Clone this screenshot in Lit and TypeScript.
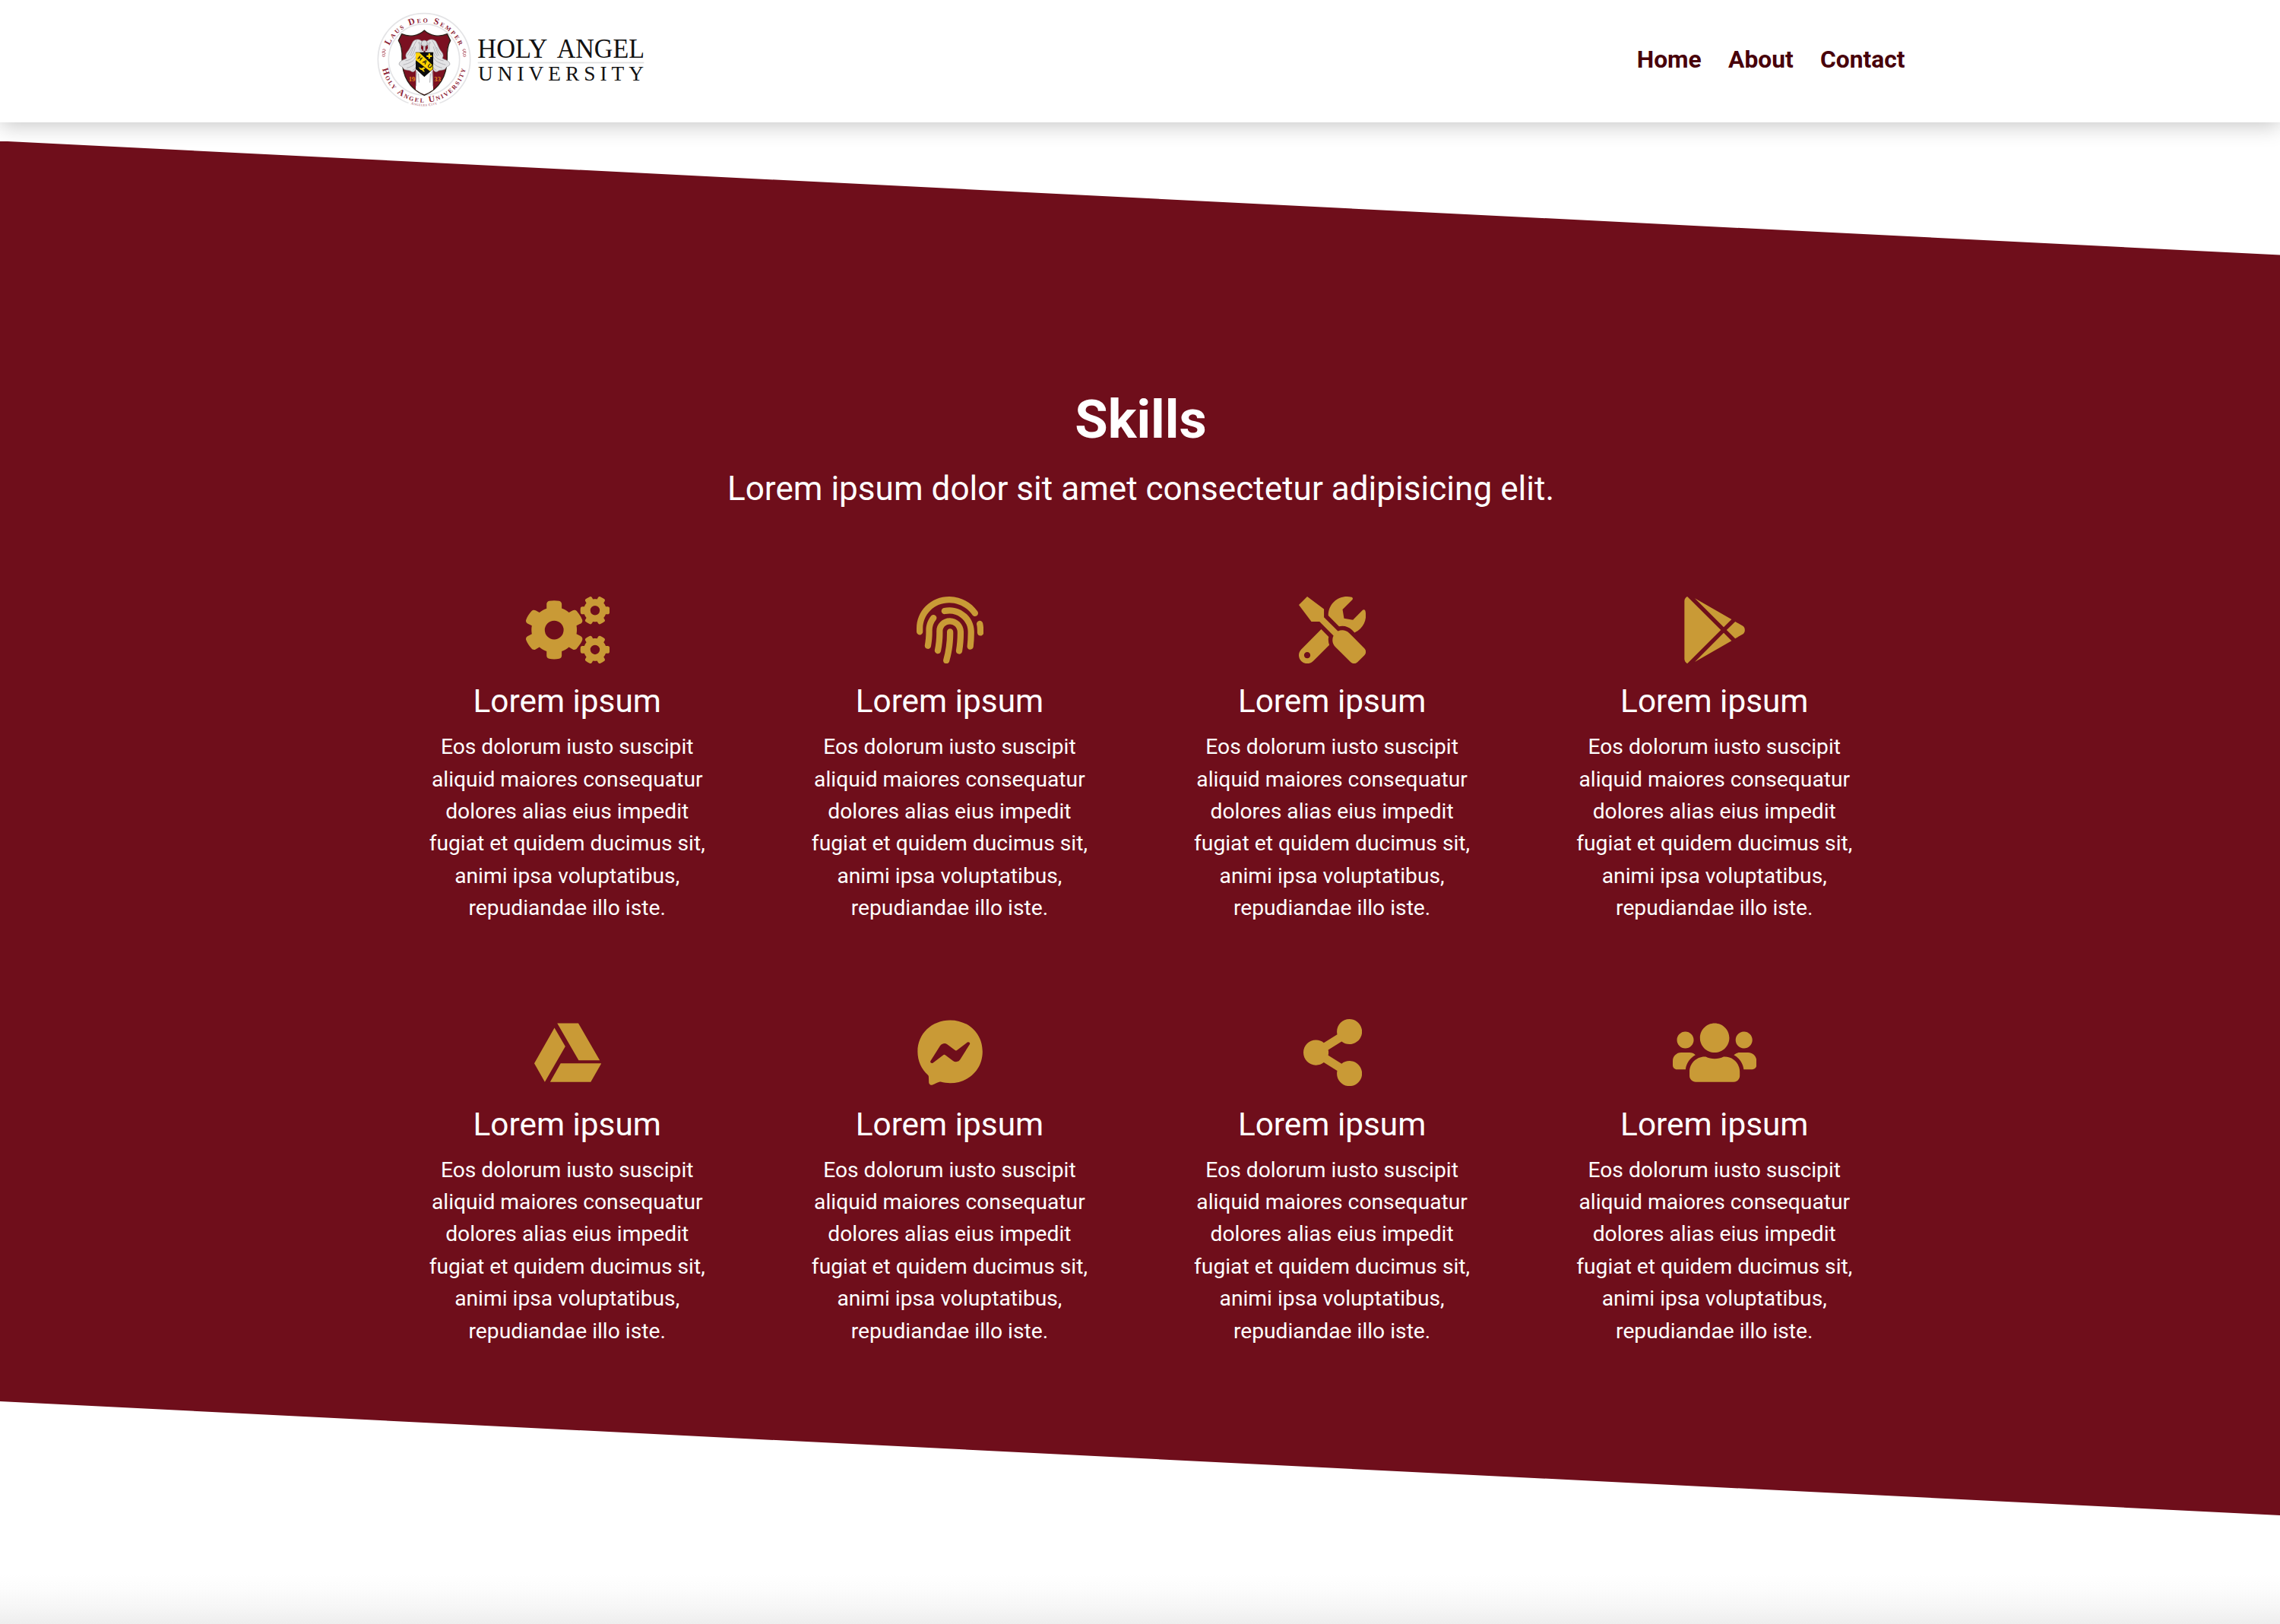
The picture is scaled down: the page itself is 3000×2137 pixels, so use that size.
import { LitElement, html, css, svg } from "lit";
import { customElement, property } from "lit/decorators.js";

interface Glyph {
  w: number;
  d: string;
}

// One small cog outline with its round hole; the icon uses it twice.
const smallCog =
  "l-8.2 14.3c-3 5.3-9.4 7.5-15.1 5.4-11.8-4.4-22.6-10.7-32.1-18.6-4.6-3.8-5.8-10.5-2.8-15.7l8.2-14.3c-6.9-8-12.3-17.3-15.9-27.4h-16.5c-6 0-11.2-4.3-12.2-10.3-2-12-2.1-24.6 0-37.1 1-6 6.2-10.4 12.2-10.4h16.5c3.6-10.1 9-19.4 15.9-27.4l-8.2-14.3c-3-5.2-1.9-11.9 2.8-15.7 9.5-7.9 20.4-14.2 32.1-18.6 5.7-2.1 12.1.1 15.1 5.4l8.2 14.3c10.5-1.9 21.2-1.9 31.7 0l8.2-14.3c3-5.3 9.4-7.5 15.1-5.4 11.8 4.4 22.6 10.7 32.1 18.6 4.6 3.8 5.8 10.5 2.8 15.7l-8.2 14.3c6.9 8 12.3 17.3 15.9 27.4h16.5c6 0 11.2 4.3 12.2 10.3 2 12 2.1 24.6 0 37.1-1 6-6.2 10.4-12.2 10.4h-16.5c-3.6 10.1-9 19.4-15.9 27.4l8.2 14.3c3 5.2 1.9 11.9-2.8 15.7-9.5 7.9-20.4 14.2-32.1 18.6-5.7 2.1-12.1-.1-15.1-5.4l-8.2-14.3c-10.4 1.9-21.2 1.9-31.7 0z";

const glyphs: Record<string, Glyph> = {
  cogs: {
    w: 640,
    d:
      "M512.1 191" + smallCog + "M492 106a36 36 0 1 0 72 0a36 36 0 1 0-72 0z" +
      "M512.1 491" + smallCog + "M492 406a36 36 0 1 0 72 0a36 36 0 1 0-72 0z" +
      "M386.3 286.1l33.7 16.8c10.1 5.8 14.5 18.1 10.5 29.1-8.9 24.2-26.4 46.4-42.6 65.8-7.4 8.9-20.2 11.1-30.3 5.3l-29.1-16.8c-16 13.7-34.6 24.6-54.9 31.7v33.6c0 11.6-8.3 21.6-19.7 23.6-24.6 4.2-50.4 4.4-75.9 0-11.5-2-20-11.9-20-23.6V418c-20.3-7.2-38.9-18-54.9-31.7L74 403c-10 5.8-22.9 3.6-30.3-5.3-16.2-19.4-33.3-41.6-42.2-65.7-4-10.9.4-23.2 10.5-29.1l33.3-16.8c-3.9-20.9-3.9-42.4 0-63.4L12 205.8c-10.1-5.8-14.6-18.1-10.5-29 8.9-24.2 26-46.4 42.2-65.8 7.4-8.9 20.2-11.1 30.3-5.3l29.1 16.8c16-13.7 34.6-24.6 54.9-31.7V57.1c0-11.5 8.2-21.5 19.6-23.5 24.6-4.2 50.5-4.4 76-.1 11.5 2 20 11.9 20 23.6v33.6c20.3 7.2 38.9 18 54.9 31.7l29.1-16.8c10-5.8 22.9-3.6 30.3 5.3 16.2 19.4 33.2 41.6 42.1 65.8 4 10.9.1 23.2-10 29.1l-33.7 16.8c3.9 21 3.9 42.5 0 63.5z" +
      "M144 256a72 72 0 1 0 144 0a72 72 0 1 0-144 0z",
  },
  fingerprint: {
    w: 512,
    d: "M256.12 245.96c-13.25 0-24 10.74-24 24 1.14 72.25-8.14 141.9-27.7 211.55-2.73 9.72 2.15 30.49 23.12 30.49 10.48 0 20.11-6.92 23.09-17.52 13.53-47.91 31.04-125.41 29.48-224.52.01-13.25-10.73-24-23.99-24zm-.86-81.73C194 164.16 151.25 211.3 152.1 265.32c.75 47.94-3.75 95.91-13.37 142.55-2.69 12.98 5.67 25.69 18.64 28.36 13.05 2.67 25.67-5.66 28.36-18.64 10.34-50.09 15.17-101.58 14.37-153.02-.41-25.95 19.92-52.49 54.45-52.34 31.31.47 57.15 25.34 57.62 55.47.77 48.05-2.81 96.33-10.61 143.55-2.17 13.06 6.69 25.42 19.76 27.58 19.97 3.33 26.81-15.1 27.58-19.77 8.28-50.03 12.06-101.21 11.27-152.11-.88-55.8-47.94-101.88-104.91-102.72zm-110.69-19.78c-10.3-8.34-25.37-6.8-33.76 3.48-25.62 31.5-39.39 71.28-38.75 112 .59 37.58-2.47 75.27-9.11 112.05-2.34 13.05 6.31 25.53 19.36 27.89 20.11 3.5 27.07-14.81 27.89-19.36 7.19-39.84 10.5-80.66 9.86-121.33-.47-29.88 9.2-57.88 28-80.97 8.35-10.28 6.79-25.39-3.49-33.76zm109.47-62.33c-15.41-.41-30.87 1.44-45.78 4.97-12.89 3.06-20.87 15.98-17.83 28.89 3.06 12.89 16 20.83 28.89 17.83 11.05-2.61 22.47-3.77 34-3.69 75.43 1.13 137.73 61.5 138.88 134.58.59 37.88-1.28 76.11-5.58 113.63-1.5 13.17 7.95 25.08 21.11 26.58 16.72 1.95 25.51-11.88 26.58-21.11a929.06 929.06 0 0 0 5.89-119.85c-1.56-98.75-85.07-180.33-186.16-181.83zm252.07 121.45c-2.86-12.92-15.51-21.2-28.61-18.27-12.94 2.86-21.12 15.66-18.26 28.61 4.71 21.41 4.91 37.41 4.7 61.6-.11 13.27 10.55 24.09 23.8 24.2h.2c13.17 0 23.89-10.61 24-23.8.18-22.18.4-44.11-5.83-72.34zm-40.12-90.72C417.29 43.46 337.6 1.29 252.81.02 183.02-.82 118.47 24.91 70.46 72.94 24.09 119.37-.9 181.04.14 246.65l-.12 21.47c-.39 13.25 10.03 24.31 23.28 24.69.23.02.48.02.72.02 12.92 0 23.59-10.3 23.97-23.3l.16-23.64c-.83-52.5 19.16-101.86 56.28-139 38.76-38.8 91.34-59.67 147.68-58.86 69.45 1.03 134.73 35.56 174.62 92.39 7.61 10.86 22.56 13.45 33.42 5.86 10.84-7.62 13.46-22.59 5.84-33.43z",
  },
  tools: {
    w: 512,
    d: "M501.1 395.7L384 278.6c-23.1-23.1-57.6-27.6-85.4-13.9L192 158.1V96L64 0 0 64l96 128h62.1l106.6 106.6c-13.6 27.8-9.2 62.3 13.9 85.4l117.1 117.1c14.6 14.6 38.2 14.6 52.7 0l52.7-52.7c14.5-14.6 14.5-38.2 0-52.7zM331.7 225c28.3 0 54.9 11 74.9 31l19.4 19.4c15.8-6.9 30.8-16.5 43.8-29.5 37.1-37.1 49.7-89.3 37.9-136.7-2.2-9-13.5-12.1-20.1-5.5l-74.4 74.4-67.9-11.3L334 98.9l74.4-74.4c6.6-6.6 3.4-17.9-5.7-20.2-47.4-11.7-99.6.9-136.6 37.9-28.5 28.5-41.9 66.1-41.2 103.6l82.1 82.1c8.1-1.9 16.5-2.9 24.7-2.9zm-103.9 82l-56.7-56.7L18.7 402.8c-25 25-25 65.5 0 90.5s65.5 25 90.5 0l123.6-123.6c-7.6-19.9-9.9-41.6-5-62.7zM64 472c-13.2 0-24-10.8-24-24 0-13.3 10.7-24 24-24s24 10.7 24 24c0 13.2-10.7 24-24 24z",
  },
  play: {
    w: 512,
    d: "M325.3 234.3L104.6 13l280.8 161.2-60.1 60.1zM47 0C34 6.8 25.3 19.2 25.3 35.3v441.3c0 16.1 8.7 28.5 21.7 35.3l256.6-256L47 0zm425.2 225.6l-58.9-34.1-65.7 64.5 65.7 64.5 60.1-34.1c18-14.3 18-46.5-1.2-60.8zM104.6 499l280.8-161.2-60.1-60.1L104.6 499z",
  },
  drive: {
    w: 512,
    d: "M339 314.9L175.4 32h161.2l163.6 282.9H339zm-137.5 23.6L120.9 480h310.5L512 338.5H201.5zM154.1 67.4L0 338.5 80.6 480 237 208.8 154.1 67.4z",
  },
  messenger: {
    w: 512,
    d: "M256.55 8C116.52 8 8 110.34 8 248.57c0 72.3 29.71 134.78 78.07 177.94 8.35 7.51 6.63 11.86 8.05 58.23A19.92 19.92 0 0 0 122 502.31c52.91-23.3 53.59-25.14 62.56-22.7C337.85 521.8 504 423.7 504 248.57 504 110.34 396.59 8 256.55 8zm149.24 185.13l-73 115.57a37.37 37.37 0 0 1-53.91 9.93l-58.08-43.47a15 15 0 0 0-18 0l-78.37 59.44c-10.46 7.93-24.16-4.6-17.11-15.67l73-115.57a37.36 37.36 0 0 1 53.91-9.93l58.06 43.46a15 15 0 0 0 18 0l78.41-59.38c10.44-7.98 24.14 4.54 17.09 15.62z",
  },
  share: {
    w: 448,
    d: "M352 320c-22.608 0-43.387 7.819-59.79 20.895l-102.486-64.054a96.551 96.551 0 0 0 0-41.683l102.486-64.054C308.613 184.181 329.392 192 352 192c53.019 0 96-42.981 96-96S405.019 0 352 0s-96 42.981-96 96c0 7.158.79 14.13 2.276 20.841L155.79 180.895C139.387 167.819 118.608 160 96 160c-53.019 0-96 42.981-96 96s42.981 96 96 96c22.608 0 43.387-7.819 59.79-20.895l102.486 64.054A96.301 96.301 0 0 0 256 416c0 53.019 42.981 96 96 96s96-42.981 96-96-42.981-96-96-96z",
  },
  users: {
    w: 640,
    d: "M96 224c35.3 0 64-28.7 64-64s-28.7-64-64-64-64 28.7-64 64 28.7 64 64 64zm448 0c35.3 0 64-28.7 64-64s-28.7-64-64-64-64 28.7-64 64 28.7 64 64 64zm32 32h-64c-17.6 0-33.5 7.1-45.1 18.6 40.3 22.1 68.9 62 75.1 109.4h66c17.7 0 32-14.3 32-32v-32c0-35.3-28.7-64-64-64zm-256 0c61.9 0 112-50.1 112-112S381.9 32 320 32 208 82.1 208 144s50.1 112 112 112zm76.8 32h-8.3c-20.8 10-43.9 16-68.5 16s-47.6-6-68.5-16h-8.3C179.6 288 128 339.6 128 403.2V432c0 26.5 21.5 48 48 48h288c26.5 0 48-21.5 48-48v-28.8c0-63.6-51.6-115.2-115.2-115.2zm-223.7-13.4C161.5 263.1 145.6 256 128 256H64c-35.3 0-64 28.7-64 64v32c0 17.7 14.3 32 32 32h65.9c6.3-47.4 34.9-87.3 75.2-109.4z",
  },
};

@customElement("university-logo")
export class UniversityLogo extends LitElement {
  static styles = css`
    :host {
      display: block;
    }
    .logo {
      display: block;
      width: 360px;
      height: 161px;
      overflow: visible;
    }
    .seal {
      font-family: "Liberation Serif", serif;
      font-variant: small-caps;
      font-weight: bold;
      fill: #8d2335;
    }
    .name {
      font-family: "Liberation Serif", serif;
      fill: #111;
    }
    .badge {
      font-family: "Liberation Sans", sans-serif;
      font-weight: bold;
      fill: #111;
    }
    .year {
      font-family: "Liberation Serif", serif;
      font-weight: bold;
      fill: #e08a1c;
    }
  `;

  private wing() {
    return svg`
      <path fill="#e3e3e5" stroke="#8f8f94" stroke-width="2" d="M232 172C226 156 204 150 192 162C184 172 180 190 170 202C160 214 160 222 165 230C154 236 138 240 136 250C132 260 150 262 152 270C158 280 176 274 184 282C194 288 200 278 204 268L212 214L232 206Z"/>
      <path fill="none" stroke="#a9a9ae" stroke-width="2.5" d="M206 160C192 174 190 200 178 220M200 206C196 224 184 236 160 240M202 222C198 240 176 250 152 256M204 240C200 256 184 264 166 268M206 256C202 268 196 274 188 278M188 186C178 206 172 212 168 218M200 184C196 200 192 210 184 222"/>
    `;
  }

  render() {
    return html`
      <svg class="logo" viewBox="42 0 1080 483" role="img" aria-label="Holy Angel University">
        <defs>
          <path id="top" d="M85 239A150 150 0 0 1 385 239" />
          <path id="bottom" d="M66 237A168 168 0 0 0 402 237" />
          <path id="city" d="M50 235A184 184 0 0 0 418 235" />
        </defs>
        <circle cx="234" cy="235" r="182" fill="none" stroke="#e4e4e6" stroke-width="5" />
        <circle cx="234" cy="235" r="140" fill="none" stroke="#e4e4e6" stroke-width="5" />
        <path d="M172 408Q234 434 296 408" fill="none" stroke="#fff" stroke-width="16" />
        <text class="seal" font-size="36">
          <textPath href="#top" startOffset="50%" text-anchor="middle" textLength="350">Laus Deo Semper</textPath>
        </text>
        <text class="seal" font-size="35">
          <textPath href="#bottom" startOffset="50%" text-anchor="middle" textLength="456">Holy Angel University</textPath>
        </text>
        <text class="seal" font-size="15" opacity="0.6">
          <textPath href="#city" startOffset="50%" text-anchor="middle" textLength="106">Angeles City</textPath>
        </text>
        <g fill="none" stroke="#b5606d" stroke-width="3">
          <path d="M70 196q8-5 12 3q-8 7-14 5m0 4q12-5 13 4q-6 6-12 3m-1 5q7 8 13-1" />
          <path d="M398 196q-8-5-12 3q8 7 14 5m0 4q-12-5-13 4q6 6 12 3m1 5q-7 8-13-1" />
        </g>
        <path
          fill="#7b1021" stroke="#2b2118" stroke-width="4" stroke-linejoin="round"
          d="M235 120C212 142 176 148 146 134L133 160C146 180 148 200 147 230C147 300 176 350 235 376C296 350 324 300 325 230C324 200 326 180 338 160L325 134C294 148 258 142 235 120Z"
        />
        <path fill="#fff" d="M202 268L201 354Q218 367 235 373Q252 367 270 354L268 268Z" />
        ${this.wing()}
        <g transform="translate(471 0) scale(-1 1)">${this.wing()}</g>
        <path fill="none" stroke="#a0a0a5" stroke-width="3" d="M206 282L202 340M212 290L214 326M265 282L269 340M259 290L257 326" />
        <path fill="#7b1021" d="M218 180q17-12 34 0l-6 20h-22z" />
        <circle cx="235" cy="171" r="12" fill="#d9d9dc" stroke="#88888d" stroke-width="2" />
        <path fill="none" stroke="#c5c5c9" stroke-width="8" d="M212 166q10 8 6 22q-2 10 8 12M259 166q-10 8-6 22q2 10-8 12M235 182v18" />
        <path fill="#0d0d0d" d="M201 206H270V272L235 304L201 272Z" />
        <path fill="#ffd400" d="M201 208H216L268 258V272L258 281L201 238Z" />
        <text class="badge" font-size="23" transform="translate(206 231) rotate(38)" textLength="66">HAU</text>
        <path fill="#ffd400" d="M251 211h7v7h7v7h-7v7h-7v-7h-7v-7h7zM213 264q10 10 20 1l6 4-8 6 6 8q-8 2-11-6-9 0-13-13z" />
        <text class="year" font-size="26" x="173" y="321" textLength="26">19</text>
        <text class="year" font-size="26" x="274" y="321" textLength="26">33</text>
        <text class="name" font-size="110" y="229"><tspan x="445" textLength="276" lengthAdjust="spacingAndGlyphs">HOLY</tspan><tspan x="758" textLength="346" lengthAdjust="spacingAndGlyphs">ANGEL</tspan></text>
        <rect x="446" y="245" width="656" height="5" fill="#dedede" />
        <text class="name" font-size="82" x="447" y="318" textLength="654">UNIVERSITY</text>
      </svg>
    `;
  }
}

@customElement("skill-card")
export class SkillCard extends LitElement {
  @property() icon = "cogs";
  @property() heading = "";
  @property() body = "";

  static styles = css`
    :host {
      display: flex;
      flex-direction: column;
      align-items: center;
      text-align: center;
      color: #fff;
    }
    .icon {
      display: block;
      height: 88.2px;
      margin-left: 1px;
      fill: #c99a36;
      fill-rule: evenodd;
    }
    .heading {
      margin: 24.5px 0 14px;
      font-size: 42.35px;
      font-weight: 400;
      line-height: 51px;
    }
    .body {
      margin: 0;
      width: 386px;
      font-size: 28.235px;
      line-height: 42.4px;
    }
  `;

  render() {
    const g = glyphs[this.icon];
    return html`
      <svg class="icon" viewBox="0 0 ${g.w} 512" aria-hidden="true"><path d=${g.d}></path></svg>
      <h3 class="heading">${this.heading}</h3>
      <p class="body">${this.body}</p>
    `;
  }
}

@customElement("app-root")
export class AppRoot extends LitElement {
  private links = ["Home", "About", "Contact"];
  private icons = ["cogs", "fingerprint", "tools", "play", "drive", "messenger", "share", "users"];
  private copy =
    "Eos dolorum iusto suscipit aliquid maiores consequatur dolores alias eius impedit fugiat et quidem ducimus sit, animi ipsa voluptatibus, repudiandae illo iste.";

  static styles = css`
    :host {
      display: flex;
      flex-direction: column;
      height: 2137px;
      overflow: hidden;
      background: #fff;
      font-family: Roboto, "Liberation Sans", sans-serif;
    }
    .header {
      position: relative;
      flex: none;
      height: 161px;
      background: #fff;
      box-shadow: 0 4px 27px rgba(0, 0, 0, 0.23);
    }
    .container {
      display: flex;
      align-items: center;
      justify-content: space-between;
      width: 2013px;
      margin: 0 auto;
    }
    .nav {
      display: flex;
      gap: 35.3px;
      padding-bottom: 3px;
    }
    .link {
      color: #48000a;
      font-size: 31.76px;
      font-weight: 700;
      line-height: 48px;
      text-decoration: none;
    }
    .skills {
      position: relative;
      box-sizing: border-box;
      flex: none;
      height: 1808.5px;
      margin-top: 24.5px;
      padding: 324.5px 0 0 2px;
      background: #6f0e1b;
      color: #fff;
      clip-path: polygon(0 0, 100% 150px, 100% 100%, 0 calc(100% - 150px));
      text-align: center;
    }
    .title {
      margin: 0;
      font-size: 70.6px;
      font-weight: 700;
      line-height: 85px;
    }
    .lead {
      margin: 15px 0 0;
      font-size: 44.1px;
      line-height: 66px;
    }
    .grid {
      display: grid;
      grid-template-columns: repeat(4, 503.2px);
      grid-auto-rows: 556.4px;
      justify-content: center;
      margin-top: 108.5px;
    }
    .footer-fade {
      flex: none;
      height: 66px;
      margin-top: auto;
      background: linear-gradient(#fff, #fcfcfc 32%, #f6f6f6 67%, #eee);
    }
  `;

  render() {
    return html`
      <header class="header">
        <div class="container">
          <university-logo></university-logo>
          <nav class="nav">${this.links.map((l) => html`<a class="link" href="#">${l}</a>`)}</nav>
        </div>
      </header>
      <section class="skills">
        <h2 class="title">Skills</h2>
        <p class="lead">Lorem ipsum dolor sit amet consectetur adipisicing elit.</p>
        <div class="grid">
          ${this.icons.map(
            (i) => html`<skill-card .icon=${i} .heading=${"Lorem ipsum"} .body=${this.copy}></skill-card>`
          )}
        </div>
      </section>
      <div class="footer-fade"></div>
    `;
  }
}
